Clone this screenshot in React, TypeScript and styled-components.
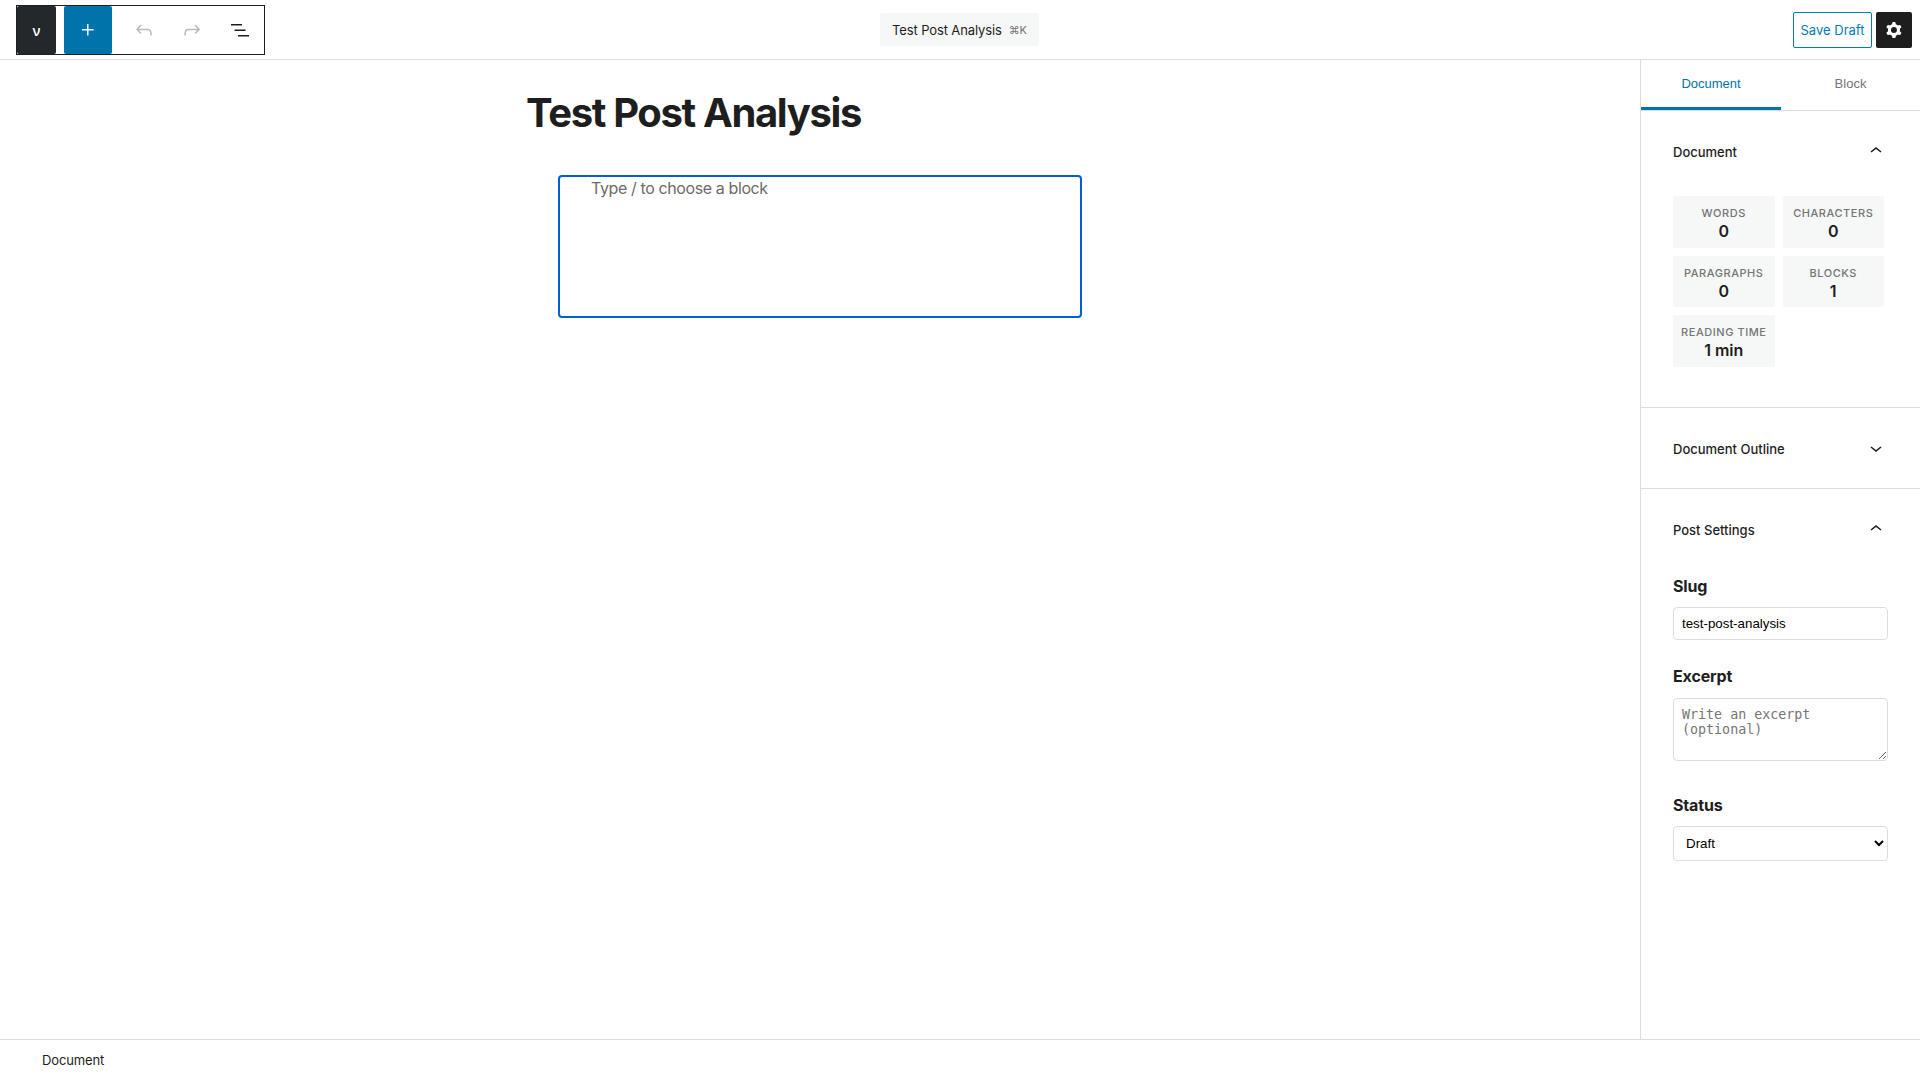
import React from "react";
import styled, { createGlobalStyle } from "styled-components";

const GlobalStyle = createGlobalStyle`
  *, *::before, *::after { box-sizing: border-box; }
  body {
    margin: 0;
    background: #fff;
    color: #1e1e1e;
    font-family: Inter, "Liberation Sans", sans-serif;
    font-size: 13px;
  }
  button { font-family: inherit; border: 0; padding: 0; margin: 0; }
`;

const Shell = styled.div`
  display: flex;
  flex-direction: column;
  height: 1080px;
  overflow: hidden;
`;

const Header = styled.header`
  display: grid;
  grid-template-columns: 1fr auto 1fr;
  align-items: center;
  flex: none;
  height: 60px;
  padding: 0 8px 0 16px;
  border-bottom: 1px solid #ddd;
`;

const Toolbar = styled.div`
  display: flex;
  justify-self: start;
  width: 249px;
  height: 50px;
  margin-top: 1px;
  border: 1px solid #1e1e1e;
`;

const Logo = styled.div`
  display: flex;
  align-items: center;
  justify-content: center;
  width: 39px;
  margin-right: 8px;
  border-radius: 2px;
  background: #23282d;
  color: #fff;
  font-family: "Open Sans", sans-serif;
  font-size: 14px;
  font-weight: 600;
`;

const ToolButton = styled.button<{ $primary?: boolean; $faded?: boolean }>`
  display: flex;
  align-items: center;
  justify-content: center;
  width: 48px;
  height: 48px;
  margin-right: ${(p) => (p.$primary ? "8px" : "0")};
  border-radius: 2px;
  background: ${(p) => (p.$primary ? "#0073aa" : "transparent")};
  color: ${(p) => (p.$primary ? "#fff" : p.$faded ? "#bbb" : "#1e1e1e")};
`;

const TitleButton = styled.button`
  display: flex;
  align-items: center;
  gap: 7px;
  height: 33px;
  width: 159px;
  padding: 0 12px;
  margin-left: -9px;
  border-radius: 2px;
  background: #f6f7f7;
  color: #1e1e1e;
  font-size: 13px;
  letter-spacing: -0.12px;
  white-space: nowrap;
`;

const Shortcut = styled.span`
  color: #757575;
  font-size: 11px;
`;

const Actions = styled.div`
  display: flex;
  justify-self: end;
  gap: 4px;
  margin-top: 1px;
`;

const SaveButton = styled.button`
  width: 79px;
  height: 36px;
  border: 1px solid #007cba;
  border-radius: 2px;
  background: #fff;
  color: #007cba;
  font-size: 13px;
  white-space: nowrap;
`;

const SettingsButton = styled.button`
  display: flex;
  align-items: center;
  justify-content: center;
  width: 36px;
  height: 36px;
  border-radius: 2px;
  background: #1e1e1e;
  color: #fff;
`;

const Body = styled.div`
  display: flex;
  flex: 1;
  min-height: 0;
`;

const Canvas = styled.main`
  flex: 1;
  padding-top: 28px;
`;

const PostTitle = styled.h1`
  width: 588px;
  margin: 0 auto 37px;
  font-size: 40px;
  line-height: 50px;
  font-weight: 700;
  letter-spacing: -1.36px;
`;

const BlockArea = styled.div`
  width: 524px;
  height: 143px;
  margin: 0 auto;
  padding: 0 31px;
  border: 2px solid #0060cf;
  border-radius: 4px;
  color: #6b6b6b;
  font-size: 16px;
  line-height: 22px;
  letter-spacing: -0.39px;
`;

const Sidebar = styled.aside`
  flex: none;
  width: 280px;
  border-left: 1px solid #ddd;
`;

const Tabs = styled.div`
  display: flex;
  height: 51px;
  border-bottom: 1px solid #ddd;
`;

const Tab = styled.button<{ $active?: boolean }>`
  flex: ${(p) => (p.$active ? "0 0 140px" : "1")};
  border-bottom: ${(p) => (p.$active ? "3px solid #0073aa" : "3px solid transparent")};
  background: transparent;
  color: ${(p) => (p.$active ? "#0073aa" : "#757575")};
  font-family: "Liberation Sans", Arial, sans-serif;
  font-size: 13px;
`;

const Panel = styled.section<{ $height?: number }>`
  height: ${(p) => (p.$height ? `${p.$height}px` : "auto")};
  padding: 0 32px;
  border-bottom: ${(p) => (p.$height ? "1px solid #ddd" : "0")};
`;

const PanelHeader = styled.h2`
  display: flex;
  align-items: center;
  justify-content: space-between;
  height: 80px;
  margin: 0;
  font-size: 13px;
  font-weight: 500;
`;

const PanelTitle = styled.span`
  padding-top: 1px;
`;

const Stats = styled.div`
  display: grid;
  grid-template-columns: 1fr 1fr;
  gap: 8px;
  width: 211px;
  margin-top: 5.3px;
`;

const Stat = styled.div`
  display: flex;
  flex-direction: column;
  align-items: center;
  height: 51.5px;
  padding-top: 8px;
  border-radius: 2px;
  background: #f6f7f7;
`;

const StatLabel = styled.span`
  color: #757575;
  font-size: 11px;
  line-height: 18px;
  font-weight: 500;
  letter-spacing: 0.55px;
  text-transform: uppercase;
  white-space: nowrap;
`;

const StatValue = styled.span`
  font-size: 16px;
  line-height: 19.4px;
  font-weight: 600;
`;

const Fields = styled.div`
  padding-top: 7px;
`;

const Field = styled.div<{ $gap: number }>`
  display: flex;
  flex-direction: column;
  margin-bottom: ${(p) => p.$gap}px;
`;

const FieldLabel = styled.label<{ $gap?: number }>`
  height: 20px;
  margin-bottom: ${(p) => p.$gap ?? 11}px;
  font-size: 16px;
  line-height: 20px;
  font-weight: 700;
  letter-spacing: -0.15px;
`;

const TextInput = styled.input`
  height: 33px;
  width: 215px;
  padding: 8px;
  border: 1px solid #ddd;
  border-radius: 4px;
  background: #fff;
  color: #000;
  font: 13.333px "Liberation Sans", Arial, sans-serif;
`;

const TextArea = styled.textarea`
  width: 215px;
  height: 63px;
  padding: 8px;
  border: 1px solid #ddd;
  border-radius: 4px;
  font: 13.333px "DejaVu Sans Mono", monospace;
  &::placeholder { color: #757575; }
`;

const Select = styled.select`
  width: 215px;
  height: 35px;
  padding: 8px;
  border: 1px solid #ddd;
  border-radius: 4px;
  background: #fff;
  color: #000;
  font: 13.333px "Liberation Sans", Arial, sans-serif;
`;

const Footer = styled.footer`
  display: flex;
  align-items: center;
  flex: none;
  height: 41px;
  padding: 0 42px;
  border-top: 1px solid #ddd;
  letter-spacing: -0.12px;
`;

const paths = {
  plus: "M11 12.5V17.5H12.5V12.5H17.5V11H12.5V6H11V11H6V12.5H11Z",
  undo: "M18.3 11.7c-.6-.6-1.4-.9-2.3-.9H6.7l2.9-3.3-1.1-1-4.5 5L8.5 16l1-1-2.7-2.7H16c.5 0 .9.2 1.3.5 1 1 1 3.4 1 4.5v.3h1.5v-.2c0-1.5 0-4.3-1.5-5.7z",
  redo: "M15.6 6.5l-1.1 1 2.9 3.3H8c-.9 0-1.7.3-2.3.9-1.4 1.5-1.4 4.2-1.4 5.6v.2h1.5v-.3c0-1.1 0-3.5 1-4.5.3-.3.7-.5 1.3-.5h9.2L14.5 15l1.1 1.1 4.6-4.6-4.6-5z",
  list: "M3 6h11v1.5H3V6Zm3.5 5.5h11V13h-11v-1.5ZM21 17H10v1.5h11V17Z",
  up: "M6.5 12.4L12 8l5.5 4.4-.9 1.2L12 10l-4.5 3.6-1-1.2z",
  down: "M17.5 11.6L12 16l-5.5-4.4.9-1.2L12 14l4.5-3.6 1 1.2z",
  cog: "M10.289 4.836A1 1 0 0111.275 4h1.306a1 1 0 01.987.836l.244 1.466c.787.26 1.503.679 2.108 1.218l1.393-.522a1 1 0 011.216.437l.653 1.13a1 1 0 01-.23 1.273l-1.148.944a6.025 6.025 0 010 2.435l1.149.946a1 1 0 01.23 1.272l-.653 1.13a1 1 0 01-1.216.437l-1.394-.522c-.605.54-1.32.958-2.108 1.218l-.244 1.466a1 1 0 01-.987.836h-1.306a1 1 0 01-.986-.836l-.244-1.466a5.995 5.995 0 01-2.108-1.218l-1.394.522a1 1 0 01-1.217-.436l-.653-1.131a1 1 0 01.23-1.272l1.149-.946a6.026 6.026 0 010-2.435l-1.148-.944a1 1 0 01-.23-1.272l.653-1.131a1 1 0 011.217-.437l1.393.522a5.994 5.994 0 012.108-1.218l.244-1.466zM14.929 12a3 3 0 11-6 0 3 3 0 016 0z",
};

const Icon = ({ name }: { name: keyof typeof paths }) => (
  <svg width="24" height="24" viewBox="0 0 24 24" fill="currentColor" aria-hidden="true">
    <path fillRule="evenodd" clipRule="evenodd" d={paths[name]} />
  </svg>
);

const stats = [
  ["Words", "0"],
  ["Characters", "0"],
  ["Paragraphs", "0"],
  ["Blocks", "1"],
  ["Reading time", "1 min"],
];

export default function App() {
  return (
    <Shell>
      <GlobalStyle />
      <Header>
        <Toolbar>
          <Logo>ν</Logo>
          <ToolButton $primary aria-label="Add block"><Icon name="plus" /></ToolButton>
          <ToolButton $faded aria-label="Undo"><Icon name="undo" /></ToolButton>
          <ToolButton $faded aria-label="Redo"><Icon name="redo" /></ToolButton>
          <ToolButton aria-label="List view"><Icon name="list" /></ToolButton>
        </Toolbar>
        <TitleButton>
          Test Post Analysis <Shortcut>⌘K</Shortcut>
        </TitleButton>
        <Actions>
          <SaveButton>Save Draft</SaveButton>
          <SettingsButton aria-label="Settings"><Icon name="cog" /></SettingsButton>
        </Actions>
      </Header>
      <Body>
        <Canvas>
          <PostTitle>Test Post Analysis</PostTitle>
          <BlockArea>Type / to choose a block</BlockArea>
        </Canvas>
        <Sidebar>
          <Tabs>
            <Tab $active>Document</Tab>
            <Tab>Block</Tab>
          </Tabs>
          <Panel $height={297}>
            <PanelHeader><PanelTitle>Document</PanelTitle><Icon name="up" /></PanelHeader>
            <Stats>
              {stats.map(([label, value]) => (
                <Stat key={label}>
                  <StatLabel>{label}</StatLabel>
                  <StatValue>{value}</StatValue>
                </Stat>
              ))}
            </Stats>
          </Panel>
          <Panel $height={81}>
            <PanelHeader><PanelTitle>Document Outline</PanelTitle><Icon name="down" /></PanelHeader>
          </Panel>
          <Panel>
            <PanelHeader><PanelTitle>Post Settings</PanelTitle><Icon name="up" /></PanelHeader>
            <Fields>
              <Field $gap={26}>
                <FieldLabel htmlFor="slug">Slug</FieldLabel>
                <TextInput id="slug" defaultValue="test-post-analysis" />
              </Field>
              <Field $gap={34}>
                <FieldLabel htmlFor="excerpt" $gap={12}>Excerpt</FieldLabel>
                <TextArea id="excerpt" placeholder="Write an excerpt (optional)" />
              </Field>
              <Field $gap={0}>
                <FieldLabel htmlFor="status">Status</FieldLabel>
                <Select id="status" defaultValue="draft">
                  <option value="draft">Draft</option>
                  <option value="published">Published</option>
                </Select>
              </Field>
            </Fields>
          </Panel>
        </Sidebar>
      </Body>
      <Footer>Document</Footer>
    </Shell>
  );
}
